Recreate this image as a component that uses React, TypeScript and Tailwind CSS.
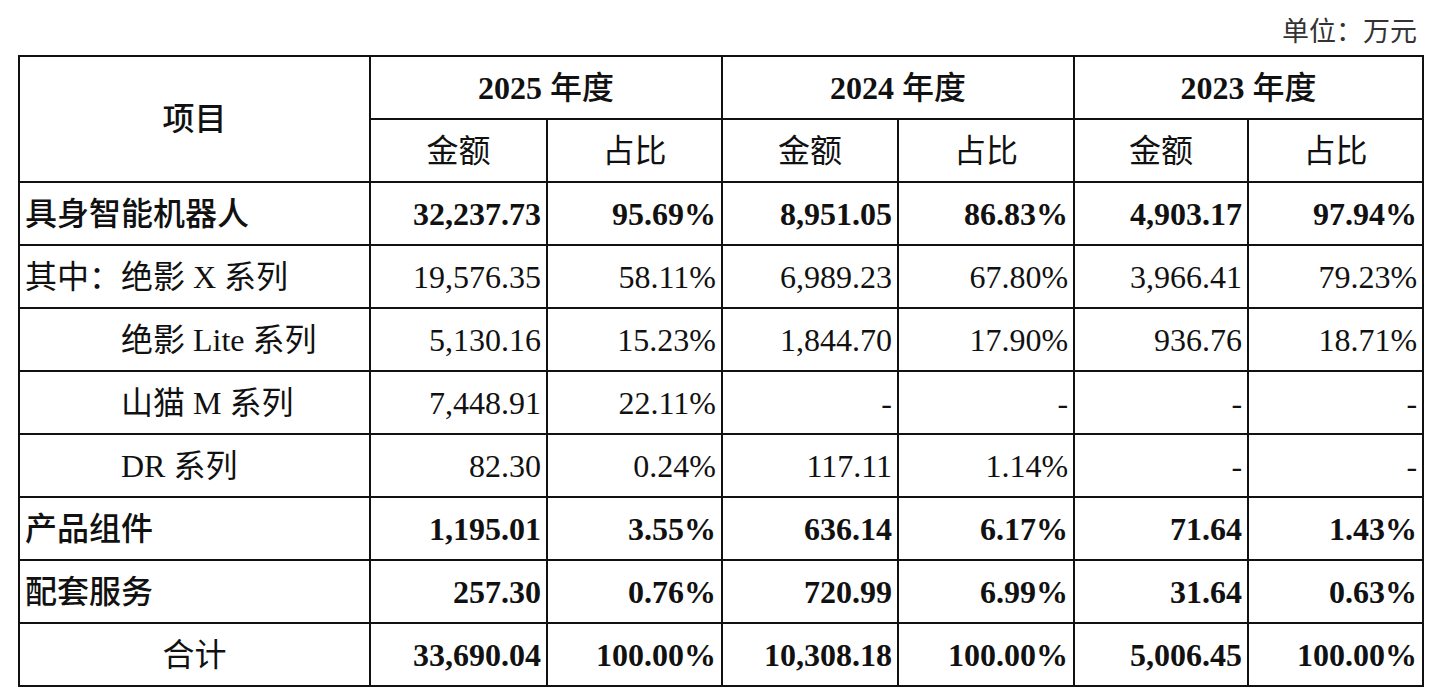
import React from 'react';

type Row = {
  label: string;
  indent?: boolean;
  center?: boolean;
  bold?: boolean;
  boldLabel?: boolean;
  values: string[];
};

const rows: Row[] = [
  {
    label: '具身智能机器人',
    bold: true,
    boldLabel: true,
    values: ['32,237.73', '95.69%', '8,951.05', '86.83%', '4,903.17', '97.94%'],
  },
  {
    label: '其中：绝影 X 系列',
    values: ['19,576.35', '58.11%', '6,989.23', '67.80%', '3,966.41', '79.23%'],
  },
  {
    label: '绝影 Lite 系列',
    indent: true,
    values: ['5,130.16', '15.23%', '1,844.70', '17.90%', '936.76', '18.71%'],
  },
  {
    label: '山猫 M 系列',
    indent: true,
    values: ['7,448.91', '22.11%', '-', '-', '-', '-'],
  },
  {
    label: 'DR 系列',
    indent: true,
    values: ['82.30', '0.24%', '117.11', '1.14%', '-', '-'],
  },
  {
    label: '产品组件',
    bold: true,
    boldLabel: true,
    values: ['1,195.01', '3.55%', '636.14', '6.17%', '71.64', '1.43%'],
  },
  {
    label: '配套服务',
    bold: true,
    boldLabel: true,
    values: ['257.30', '0.76%', '720.99', '6.99%', '31.64', '0.63%'],
  },
  {
    label: '合计',
    center: true,
    bold: true,
    values: ['33,690.04', '100.00%', '10,308.18', '100.00%', '5,006.45', '100.00%'],
  },
];

const years = ['2025', '2024', '2023'];
const font = "font-['Liberation_Serif','Noto_Sans_CJK_SC',serif]";
const cell = 'border-2 border-[#111] h-[63px] p-0';

export default function App() {
  return (
    <div className={`bg-white w-[1440px] h-[700px] text-[#111] ${font}`}>
      <div className="h-[55px] flex items-end justify-end pr-[23px] pb-[9px] text-[27px] leading-none text-[#333]">
        单位：万元
      </div>
      <table className="ml-[18px] w-[1404px] table-fixed border-collapse text-[32px] leading-none">
        <colgroup>
          <col className="w-[351px]" />
          <col className="w-[177px]" />
          <col className="w-[175px]" />
          <col className="w-[176px]" />
          <col className="w-[176px]" />
          <col className="w-[174px]" />
          <col className="w-[175px]" />
        </colgroup>
        <thead>
          <tr>
            <th rowSpan={2} className={`${cell} text-center font-medium`}>
              项目
            </th>
            {years.map(y => (
              <th key={y} colSpan={2} className={`${cell} text-center font-bold`}>
                {y} <span className="font-medium">年度</span>
              </th>
            ))}
          </tr>
          <tr>
            {years.map(y => (
              <React.Fragment key={y}>
                <th className={`${cell} text-center font-normal`}>金额</th>
                <th className={`${cell} text-center font-normal`}>占比</th>
              </React.Fragment>
            ))}
          </tr>
        </thead>
        <tbody>
          {rows.map(row => (
            <tr key={row.label}>
              <td
                className={`${cell} whitespace-nowrap ${
                  row.center ? 'text-center' : 'text-left pl-[5px]'
                } ${row.indent ? 'pl-[101px]' : ''} ${row.boldLabel ? 'font-medium' : 'font-normal'}`}
              >
                {row.label}
              </td>
              {row.values.map((v, i) => (
                <td
                  key={i}
                  className={`${cell} text-right pr-[5px] ${row.bold ? 'font-bold' : 'font-normal'}`}
                >
                  {v}
                </td>
              ))}
            </tr>
          ))}
        </tbody>
      </table>
    </div>
  );
}
